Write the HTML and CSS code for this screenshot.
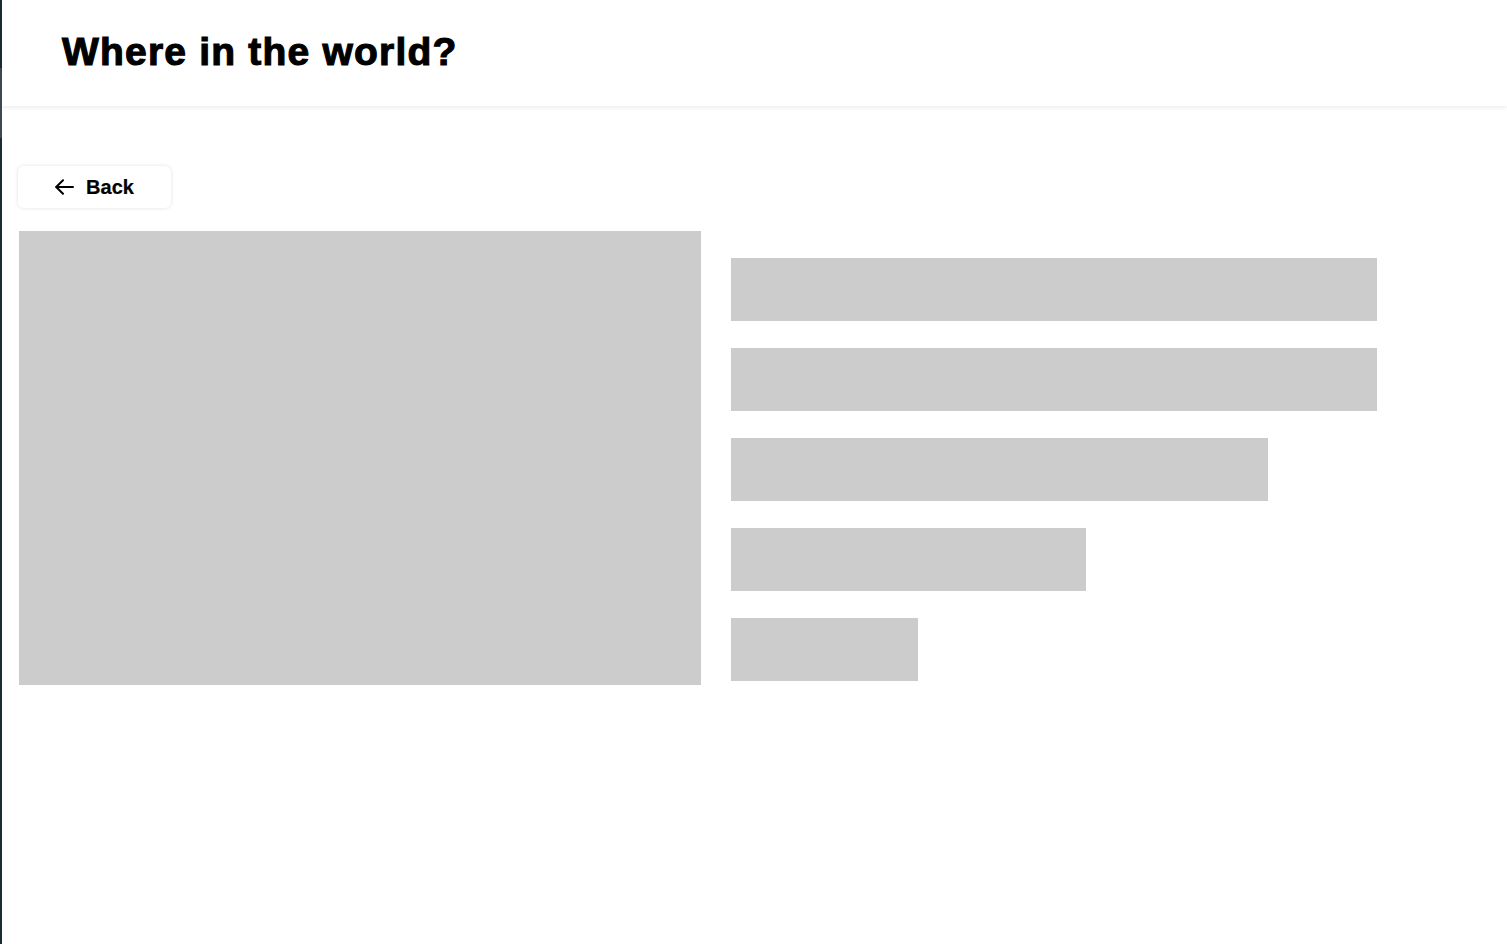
FILE: index.html
```html
<!DOCTYPE html>
<html>
<head>
  <title>Where in the world?</title>
  <meta charset="utf-8" />
  <link rel="stylesheet" href="styles.css">
</head>
<body>

  <header class="header">
    <h1 class="title">Where in the world?</h1>
  </header>

  <main class="detail">
    <button class="back-btn">
      <svg class="back-icon" width="19" height="16" viewBox="0 0 19 16" fill="none" stroke="#000" stroke-width="2" stroke-linecap="round" stroke-linejoin="round">
        <path d="M18 8H1.5" />
        <path d="M8 1.2L1.2 8l6.8 6.8" />
      </svg>
      Back
    </button>

    <div class="detail-body">
      <div class="skeleton flag"></div>
      <div class="info">
        <div class="skeleton line" style="width: 646px"></div>
        <div class="skeleton line" style="width: 646px"></div>
        <div class="skeleton line" style="width: 537px"></div>
        <div class="skeleton line" style="width: 355px"></div>
        <div class="skeleton line" style="width: 187px"></div>
      </div>
    </div>
  </main>

</body>
</html>
```

FILE: styles.css
```css
html {
  height: 100%;
  background: linear-gradient(to bottom, #1a2a33 0, #1a2a33 68px, #3d4951 68px, #3d4951 138px, #1b2a33 138px);
}

body {
  margin: 0 0 0 2px;
  min-height: 100%;
  background-color: #fff;
  font-family: "Liberation Sans", Arial, sans-serif;
  color: #000;
  overflow: hidden;
}

.header {
  height: 106px;
  display: flex;
  align-items: center;
  padding-left: 60px;
  background-color: #fff;
  box-shadow: 0 2px 4px rgba(0, 0, 0, 0.07);
  position: relative;
}

.title {
  margin: 0 0 2px;
  font-size: 39px;
  font-weight: 700;
  letter-spacing: 1.2px;
  -webkit-text-stroke: 1.1px #000;
}

.detail {
  padding: 60px 0 0 16px;
}

.back-btn {
  width: 153px;
  height: 42px;
  display: flex;
  align-items: center;
  justify-content: center;
  gap: 12px;
  padding: 0;
  font-family: inherit;
  font-size: 20px;
  font-weight: 700;
  color: #000;
  background-color: #fff;
  border: none;
  border-radius: 6px;
  box-shadow: 0 0 4px rgba(0, 0, 0, 0.12);
  cursor: pointer;
  -webkit-text-stroke: 0.2px #000;
}

.back-icon {
  display: block;
}

.detail-body {
  display: flex;
  gap: 30px;
  margin-top: 23px;
  padding-left: 1px;
}

.skeleton {
  background-color: #cccccc;
}

.flag {
  width: 682px;
  height: 454px;
  flex-shrink: 0;
}

.info {
  display: flex;
  flex-direction: column;
  gap: 27px;
  padding-top: 27px;
}

.line {
  height: 63px;
}
```
